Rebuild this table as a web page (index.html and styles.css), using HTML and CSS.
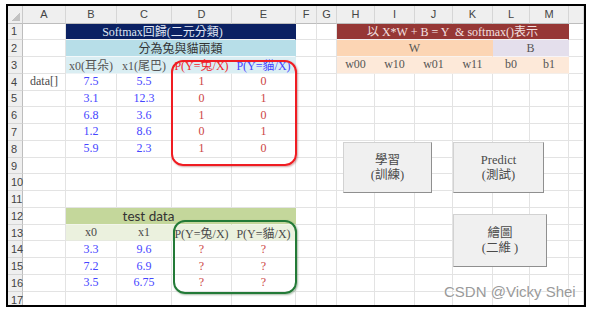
FILE: index.html
```html
<!DOCTYPE html>
<html lang="zh-Hant">
<head>
<meta charset="utf-8">
<title>Softmax</title>
<link rel="stylesheet" href="styles.css">
</head>
<body>
<div class="frame">
  <div class="sheet">
    <div class="corner"></div><div class="ch">A</div><div class="ch">B</div><div class="ch">C</div><div class="ch">D</div><div class="ch">E</div><div class="ch">F</div><div class="ch">G</div><div class="ch">H</div><div class="ch">I</div><div class="ch">J</div><div class="ch">K</div><div class="ch">L</div><div class="ch">M</div><div class="ch"></div>

    <div class="rn">1</div><div class="c"></div><div class="c s4 navy title-left">Softmax回歸(二元分類)</div><div class="c"></div><div class="c"></div><div class="c s6 maroon">以 X*W + B = Y &nbsp;&amp; softmax()表示</div><div class="c"></div>

    <div class="rn">2</div><div class="c"></div><div class="c s4 lblue">分為兔與貓兩類</div><div class="c"></div><div class="c"></div><div class="c s4 peach">W</div><div class="c s2 lav">B</div><div class="c"></div>

    <div class="rn">3</div><div class="c"></div><div class="c pblue">x0(耳朵)</div><div class="c pblue">x1(尾巴)</div><div class="c pblue red-h">P(Y=兔/X)</div><div class="c pblue blue-h">P(Y=貓/X)</div><div class="c"></div><div class="c"></div><div class="c ppeach">w00</div><div class="c ppeach">w10</div><div class="c ppeach">w01</div><div class="c ppeach">w11</div><div class="c ppeach">b0</div><div class="c ppeach">b1</div><div class="c"></div>

    <div class="rn">4</div><div class="c">data[]</div><div class="c v">7.5</div><div class="c v">5.5</div><div class="c r">1</div><div class="c r">0</div><div class="c"></div><div class="c"></div><div class="c"></div><div class="c"></div><div class="c"></div><div class="c"></div><div class="c"></div><div class="c"></div><div class="c"></div>

    <div class="rn">5</div><div class="c"></div><div class="c v">3.1</div><div class="c v">12.3</div><div class="c r">0</div><div class="c r">1</div><div class="c"></div><div class="c"></div><div class="c"></div><div class="c"></div><div class="c"></div><div class="c"></div><div class="c"></div><div class="c"></div><div class="c"></div>

    <div class="rn">6</div><div class="c"></div><div class="c v">6.8</div><div class="c v">3.6</div><div class="c r">1</div><div class="c r">0</div><div class="c"></div><div class="c"></div><div class="c"></div><div class="c"></div><div class="c"></div><div class="c"></div><div class="c"></div><div class="c"></div><div class="c"></div>

    <div class="rn">7</div><div class="c"></div><div class="c v">1.2</div><div class="c v">8.6</div><div class="c r">0</div><div class="c r">1</div><div class="c"></div><div class="c"></div><div class="c"></div><div class="c"></div><div class="c"></div><div class="c"></div><div class="c"></div><div class="c"></div><div class="c"></div>

    <div class="rn">8</div><div class="c"></div><div class="c v">5.9</div><div class="c v">2.3</div><div class="c r">1</div><div class="c r">0</div><div class="c"></div><div class="c"></div><div class="c"></div><div class="c"></div><div class="c"></div><div class="c"></div><div class="c"></div><div class="c"></div><div class="c"></div>

    <div class="rn">9</div><div class="c"></div><div class="c"></div><div class="c"></div><div class="c"></div><div class="c"></div><div class="c"></div><div class="c"></div><div class="c"></div><div class="c"></div><div class="c"></div><div class="c"></div><div class="c"></div><div class="c"></div><div class="c"></div>

    <div class="rn">10</div><div class="c"></div><div class="c"></div><div class="c"></div><div class="c"></div><div class="c"></div><div class="c"></div><div class="c"></div><div class="c"></div><div class="c"></div><div class="c"></div><div class="c"></div><div class="c"></div><div class="c"></div><div class="c"></div>

    <div class="rn">11</div><div class="c"></div><div class="c"></div><div class="c"></div><div class="c"></div><div class="c"></div><div class="c"></div><div class="c"></div><div class="c"></div><div class="c"></div><div class="c"></div><div class="c"></div><div class="c"></div><div class="c"></div><div class="c"></div>

    <div class="rn">12</div><div class="c"></div><div class="c s3 green test">test data</div><div class="c green"></div><div class="c"></div><div class="c"></div><div class="c"></div><div class="c"></div><div class="c"></div><div class="c"></div><div class="c"></div><div class="c"></div><div class="c"></div>

    <div class="rn">13</div><div class="c"></div><div class="c lgreen">x0</div><div class="c lgreen">x1</div><div class="c lgreen">P(Y=兔/X)</div><div class="c lgreen">P(Y=貓/X)</div><div class="c"></div><div class="c"></div><div class="c"></div><div class="c"></div><div class="c"></div><div class="c"></div><div class="c"></div><div class="c"></div><div class="c"></div>

    <div class="rn">14</div><div class="c"></div><div class="c v">3.3</div><div class="c v">9.6</div><div class="c r">?</div><div class="c r">?</div><div class="c"></div><div class="c"></div><div class="c"></div><div class="c"></div><div class="c"></div><div class="c"></div><div class="c"></div><div class="c"></div><div class="c"></div>

    <div class="rn">15</div><div class="c"></div><div class="c v">7.2</div><div class="c v">6.9</div><div class="c r">?</div><div class="c r">?</div><div class="c"></div><div class="c"></div><div class="c"></div><div class="c"></div><div class="c"></div><div class="c"></div><div class="c"></div><div class="c"></div><div class="c"></div>

    <div class="rn">16</div><div class="c"></div><div class="c v">3.5</div><div class="c v">6.75</div><div class="c r">?</div><div class="c r">?</div><div class="c"></div><div class="c"></div><div class="c"></div><div class="c"></div><div class="c"></div><div class="c"></div><div class="c"></div><div class="c"></div><div class="c"></div>

    <div class="rn">17</div><div class="c"></div><div class="c"></div><div class="c"></div><div class="c"></div><div class="c"></div><div class="c"></div><div class="c"></div><div class="c"></div><div class="c"></div><div class="c"></div><div class="c"></div><div class="c"></div><div class="c"></div><div class="c"></div>
  </div>

  <div class="hl hl-red"></div>
  <div class="hl hl-green"></div>

  <div class="btn btn-train"><span>學習</span><span>(訓練)</span></div>
  <div class="btn btn-predict"><span>Predict</span><span>(測試)</span></div>
  <div class="btn btn-plot"><span>繪圖</span><span>(二維 )</span></div>

  <div class="watermark">CSDN @Vicky Shei</div>
</div>
</body>
</html>
```

FILE: styles.css
```css
html, body {
  margin: 0;
  padding: 0;
  background: #ffffff;
}

.frame {
  position: relative;
  margin: 4px 0 0 6px;
  width: 576px;
  height: 299px;
  border: 2px solid #000;
  overflow: hidden;
  background: #fff;
}

.sheet {
  display: grid;
  grid-template-columns: 15px 43px 51px 55px 60px 64px 21px 20px 38px 40px 38px 40px 37px 39px 1fr;
  grid-template-rows: 17.5px repeat(17, 16.77px);
  font-family: "Liberation Serif", "Noto Sans CJK TC", serif;
  font-size: 12px;
  color: #4a4a4a;
}

.sheet > div {
  box-sizing: border-box;
  display: flex;
  align-items: center;
  justify-content: center;
  white-space: nowrap;
  overflow: visible;
}

.corner {
  background: #efefef;
  border-right: 1px solid #c9c9c9;
  border-bottom: 1px solid #bdbdbd;
  position: relative;
}
.corner::after {
  content: "";
  position: absolute;
  right: 2px;
  bottom: 2px;
  width: 9px;
  height: 9px;
  background: linear-gradient(to bottom right, transparent 50%, #c2c2c2 50%);
}

.ch {
  background: #efefef;
  border-right: 1px solid #d6d6d6;
  border-bottom: 1px solid #bdbdbd;
  font-family: "Liberation Sans", "DejaVu Sans", sans-serif;
  font-size: 11px;
  color: #444;
}

.rn {
  background: #efefef;
  border-right: 1px solid #bdbdbd;
  border-bottom: 1px solid #d6d6d6;
  font-family: "Liberation Sans", "DejaVu Sans", sans-serif;
  font-size: 11px;
  color: #444;
  justify-content: flex-start !important;
  padding-left: 3px;
}

.c {
  border-right: 1px solid #e3e3e3;
  border-bottom: 1px solid #e3e3e3;
  color: #4a4a4a;
}

.s2 { grid-column: span 2; }
.s3 { grid-column: span 3; }
.s4 { grid-column: span 4; }
.s6 { grid-column: span 6; }

.navy {
  background: #0b2163;
  color: #dfe4f2;
  border-color: #0b2163 #0b2163 #f4f4f4;
}
.title-left { padding-right: 36px; }

.maroon {
  background: #963735;
  color: #f3e0e0;
  border-color: #963735 #963735 #f4f4f4;
}

.lblue {
  background: #b7dee8;
  color: #333;
  border-color: #b7dee8 #b7dee8 #f2f8fa;
}
.pblue {
  background: #daeef3;
  color: #555;
  border-color: #daeef3 #daeef3 #eef4f6;
}
.peach {
  background: #fcd5b4;
  color: #555;
  border-color: #fcd5b4 #fcd5b4 #faf3ee;
}
.lav {
  background: #e4dfec;
  color: #555;
  border-color: #e4dfec #e4dfec #f6f4f8;
}
.ppeach {
  background: #fde9d9;
  color: #555;
  border-color: #fde9d9 #fde9d9 #f4eee9;
}
.green {
  background: #c4d79b;
  border-color: #c4d79b #c4d79b #f2f5ea;
}
.test {
  font-family: Lato, "Liberation Sans", sans-serif;
  font-size: 13.5px;
  color: #333;
}
.lgreen {
  background: #ebf1de;
  color: #4a4a4a;
  border-color: #ebf1de #ebf1de #e6e9df;
}

.red-h { color: #f0242c; }
.blue-h { color: #4545ff; }
.v { color: #4646ff; }
.r { color: #cc4444; }

.hl {
  position: absolute;
  box-sizing: border-box;
  border-radius: 12px;
  pointer-events: none;
}
.hl-red {
  left: 163px;
  top: 54px;
  width: 126px;
  height: 106px;
  border: 2px solid #f01c22;
  box-shadow: 1px 1px 2px rgba(120, 0, 0, 0.35);
}
.hl-green {
  left: 165px;
  top: 214px;
  width: 124px;
  height: 74px;
  border: 2px solid #237a37;
  box-shadow: 1px 1px 2px rgba(0, 60, 0, 0.35);
}

.btn {
  position: absolute;
  box-sizing: border-box;
  display: flex;
  flex-direction: column;
  align-items: center;
  justify-content: center;
  background: #f0f0f0;
  border: 1px solid #d2d2d2;
  border-right-color: #8f8f8f;
  border-bottom-color: #8f8f8f;
  font-family: "Liberation Serif", "Noto Sans CJK TC", serif;
  font-size: 12.5px;
  line-height: 15px;
  color: #4a4a4a;
}
.btn-train { left: 335px; top: 136px; width: 89px; height: 51px; }
.btn-predict { left: 445px; top: 136px; width: 91px; height: 51px; }
.btn-plot { left: 445px; top: 208px; width: 94px; height: 53px; }

.watermark {
  position: absolute;
  left: 436px;
  top: 277px;
  font-family: "Liberation Sans", Arial, sans-serif;
  font-size: 15px;
  color: #9a9a9a;
  text-shadow: 0 0 2px #fff, 0 0 2px #fff;
  white-space: nowrap;
}
```
